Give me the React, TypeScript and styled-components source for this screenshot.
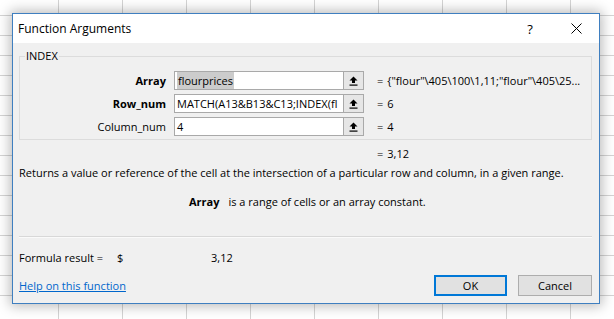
import styled, { createGlobalStyle } from "styled-components";

const GlobalStyle = createGlobalStyle`
    html, body {
        margin: 0;
        padding: 0;
    }
    body {
        width: 614px;
        height: 319px;
        overflow: hidden;
        background-color: #ffffff;
        background-image:
            repeating-linear-gradient(to right, transparent 0 63px, #d4d4d4 63px 64px),
            repeating-linear-gradient(to bottom, transparent 0 19px, #d4d4d4 19px 20px);
        background-position: -5px 0, 0 -4px;
        font-family: "Open Sans", "Noto Sans", sans-serif;
        font-size: 11px;
        color: #000;
    }
`;

interface ArgRow {
    name: string;
    required: boolean;
    input: string;
    selected?: boolean;
    value: string;
}

const args: ArgRow[] = [
    { name: "Array", required: true, input: "flourprices", selected: true, value: '{"flour"\\405\\100\\1,11;"flour"\\405\\25...' },
    { name: "Row_num", required: true, input: "MATCH(A13&B13&C13;INDEX(fl", value: "6" },
    { name: "Column_num", required: false, input: "4", value: "4" },
];

function CollapseIcon() {
    return (
        <svg width="9" height="10" viewBox="0 0 9 10">
            <path d="M4.5 0.5 L8.5 4.5 L6 4.5 L6 7 L3 7 L3 4.5 L0.5 4.5 Z" fill="#000" />
            <rect x="0.5" y="8.5" width="8" height="1.2" fill="#000" />
        </svg>
    );
}

function CloseIcon() {
    return (
        <svg width="11" height="11" viewBox="0 0 11 11">
            <path d="M0.5 0.5 L10.5 10.5 M10.5 0.5 L0.5 10.5" stroke="#000" strokeWidth="1" />
        </svg>
    );
}

function EqValue({ value }: { value: string }) {
    return (
        <Result>
            <span>=</span>
            <span>{value}</span>
        </Result>
    );
}

export default function App() {
    return (
        <>
            <GlobalStyle />
            <Page>
                <Dialog>
                    <TitleBar>
                        <Title>Function Arguments</Title>
                        <CaptionButton>?</CaptionButton>
                        <CaptionButton>
                            <CloseIcon />
                        </CaptionButton>
                    </TitleBar>
                    <Body>
                        <Group>
                            <Legend>INDEX</Legend>
                            <ArgGrid>
                                {args.map((a) => (
                                    <ArgLine key={a.name}>
                                        <ArgLabel $bold={a.required}>{a.name}</ArgLabel>
                                        <Field>
                                            <FieldText>
                                                {a.selected ? <Selection>{a.input}</Selection> : a.input}
                                            </FieldText>
                                            <RefButton>
                                                <CollapseIcon />
                                            </RefButton>
                                        </Field>
                                        <EqValue value={a.value} />
                                    </ArgLine>
                                ))}
                            </ArgGrid>
                        </Group>
                        <ResultLine>
                            <EqValue value="3,12" />
                        </ResultLine>
                        <Description>
                            Returns a value or reference of the cell at the intersection of a particular row and column, in a given range.
                        </Description>
                        <ArgHelp>
                            <b>Array</b>
                            <span>is a range of cells or an array constant.</span>
                        </ArgHelp>
                        <Separator />
                        <FormulaResult>
                            <span>Formula result =</span>
                            <span>$</span>
                            <span>3,12</span>
                        </FormulaResult>
                        <Footer>
                            <HelpLink href="#">Help on this function</HelpLink>
                            <Button $default>OK</Button>
                            <Button>Cancel</Button>
                        </Footer>
                    </Body>
                </Dialog>
            </Page>
        </>
    );
}

const Page = styled.div`
    padding: 13px 0 0 12px;
`;

const Dialog = styled.div`
    width: 586px;
    height: 289px;
    border: 1px solid #3f7fc0;
    background: #f0f0f0;
    box-shadow: 0 0 12px 2px rgba(0, 0, 0, 0.28);
    display: flex;
    flex-direction: column;
`;

const TitleBar = styled.div`
    height: 29px;
    background: #ffffff;
    display: flex;
    align-items: stretch;
`;

const Title = styled.div`
    flex: 1;
    display: flex;
    align-items: center;
    padding-left: 5px;
    font-size: 12px;
`;

const CaptionButton = styled.div`
    width: 46px;
    display: flex;
    align-items: center;
    justify-content: center;
    font-size: 13px;
`;

const Body = styled.div`
    flex: 1;
    display: flex;
    flex-direction: column;
    padding: 0 7px 0 6px;
`;

const Group = styled.fieldset`
    margin: 5px 0 0;
    padding: 0 0 3px;
    border: 1px solid #dcdcdc;
    min-width: 0;
`;

const Legend = styled.legend`
    margin-left: 5px;
    padding: 0 1px;
    line-height: 16px;
    font-size: 11px;
`;

const ArgGrid = styled.div`
    display: flex;
    flex-direction: column;
    gap: 4px;
    margin-top: 7px;
`;

const ArgLine = styled.div`
    display: grid;
    grid-template-columns: 146px 190px 1fr;
    column-gap: 8px;
    align-items: center;
    height: 19px;
`;

const ArgLabel = styled.div<{ $bold?: boolean }>`
    text-align: right;
    font-weight: ${(p) => (p.$bold ? 700 : 400)};
`;

const Field = styled.div`
    display: flex;
    height: 19px;
    box-sizing: border-box;
    border: 1px solid #a9a9a9;
    background: #ffffff;
`;

const FieldText = styled.div`
    flex: 1;
    min-width: 0;
    overflow: hidden;
    white-space: nowrap;
    padding-left: 2px;
    line-height: 17px;
`;

const Selection = styled.span`
    background: #cccccc;
    padding: 1px 1px;
`;

const RefButton = styled.div`
    width: 19px;
    border-left: 1px solid #a9a9a9;
    background: #e6e6e6;
    display: flex;
    align-items: center;
    justify-content: center;
`;

const Result = styled.div`
    display: flex;
    gap: 4px;
    padding-left: 5px;
    white-space: nowrap;
    overflow: hidden;
    line-height: 16px;
`;

const ResultLine = styled.div`
    margin-top: 6px;
    padding-left: 353px;
`;

const Description = styled.div`
    margin-top: 3px;
    line-height: 16px;
    white-space: nowrap;
`;

const ArgHelp = styled.div`
    margin-top: 13px;
    line-height: 16px;
    display: flex;
    gap: 9px;
    padding-left: 170px;
`;

const Separator = styled.div`
    margin-top: 26px;
    height: 1px;
    background: #d8d8d8;
    border-bottom: 1px solid #fafafa;
`;

const FormulaResult = styled.div`
    margin-top: 12px;
    line-height: 16px;
    display: grid;
    grid-template-columns: 98px 94px auto;
`;

const Footer = styled.div`
    margin-top: 9px;
    display: flex;
    align-items: center;
    gap: 11px;
`;

const HelpLink = styled.a`
    flex: 1;
    color: #0066cc;
    text-decoration: underline;
`;

const Button = styled.div<{ $default?: boolean }>`
    width: ${(p) => (p.$default ? "73px" : "74px")};
    height: 21px;
    box-sizing: border-box;
    border: ${(p) => (p.$default ? "2px solid #0078d7" : "1px solid #adadad")};
    background: #e1e1e1;
    display: flex;
    align-items: center;
    justify-content: center;
`;
